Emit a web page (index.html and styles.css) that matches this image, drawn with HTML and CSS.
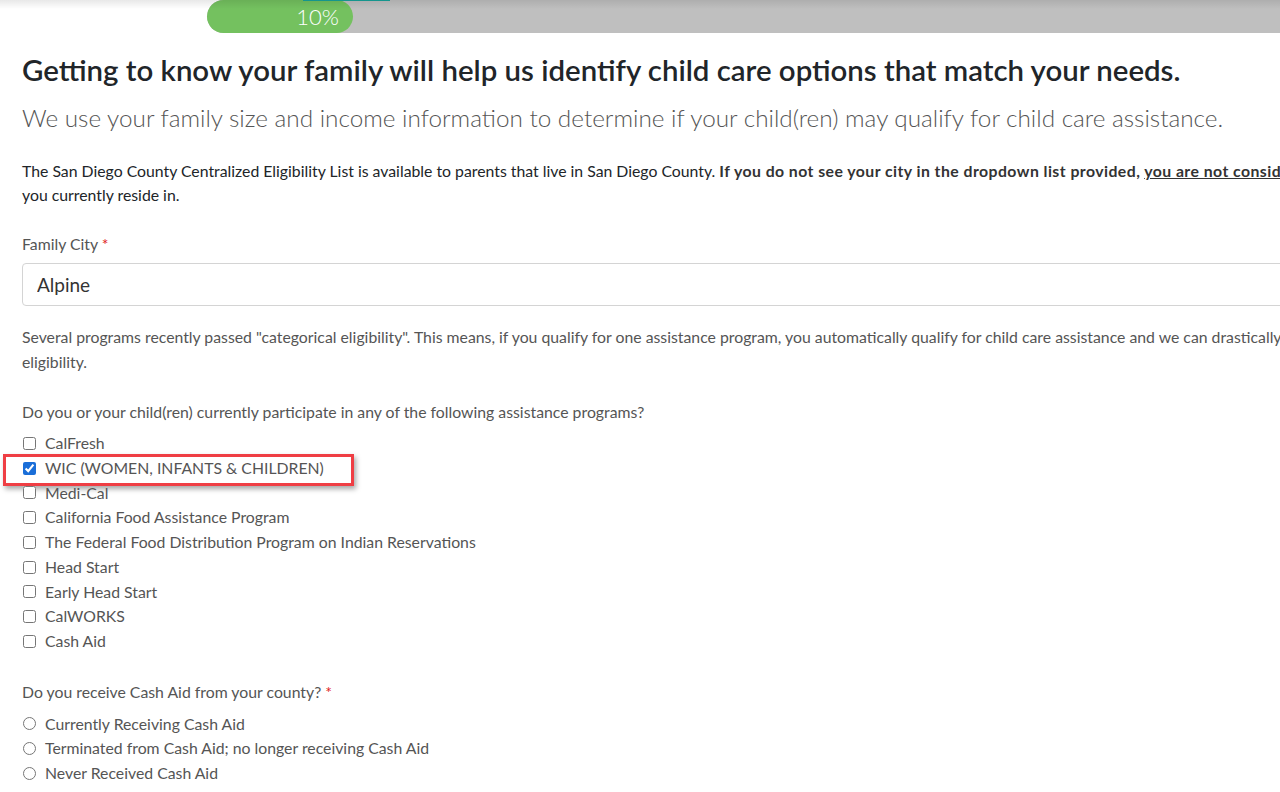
FILE: index.html
```html
<!DOCTYPE html>
<html lang="en">
<head>
    <meta charset="UTF-8">
    <meta name="viewport" content="width=device-width, initial-scale=1.0">
    <title>Family Information</title>
    <link rel="stylesheet" href="styles.css">
</head>
<body>
    <div class="page">
        <div class="progress-wrap">
            <div class="progress">
                <div class="progress-bar" style="width: 146px;">10%</div>
            </div>
            <span class="progress-tick"></span>
        </div>

        <div class="content">
            <h1>Getting to know your family will help us identify child care options that match your needs.</h1>
            <p class="lead">We use your family size and income information to determine if your child(ren) may qualify for child care assistance.</p>

            <p class="intro">The San Diego County Centralized Eligibility List is available to parents that live in San Diego County. <strong>If you do not see your city in the dropdown list provided, <u>you are not considered a resident</u></strong> and should contact the county<br>you currently reside in.</p>

            <label class="field-label" for="familyCity">Family City <span class="req">*</span></label>
            <select class="form-select" id="familyCity">
                <option>Alpine</option>
            </select>

            <p class="note">Several programs recently passed "categorical eligibility". This means, if you qualify for one assistance program, you automatically qualify for child care assistance and we can drastically reduce the time needed<br>eligibility.</p>

            <div class="question">Do you or your child(ren) currently participate in any of the following assistance programs?</div>
            <ul class="checks">
                <li><input type="checkbox" id="p1"><label for="p1">CalFresh</label></li>
                <li class="marked"><input type="checkbox" id="p2" checked><label for="p2">WIC (WOMEN, INFANTS &amp; CHILDREN)</label><span class="highlight"></span></li>
                <li><input type="checkbox" id="p3"><label for="p3">Medi-Cal</label></li>
                <li><input type="checkbox" id="p4"><label for="p4">California Food Assistance Program</label></li>
                <li><input type="checkbox" id="p5"><label for="p5">The Federal Food Distribution Program on Indian Reservations</label></li>
                <li><input type="checkbox" id="p6"><label for="p6">Head Start</label></li>
                <li><input type="checkbox" id="p7"><label for="p7">Early Head Start</label></li>
                <li><input type="checkbox" id="p8"><label for="p8">CalWORKS</label></li>
                <li><input type="checkbox" id="p9"><label for="p9">Cash Aid</label></li>
            </ul>

            <div class="question">Do you receive Cash Aid from your county? <span class="req">*</span></div>
            <ul class="checks last">
                <li><input type="radio" name="cashAid" id="c1"><label for="c1">Currently Receiving Cash Aid</label></li>
                <li><input type="radio" name="cashAid" id="c2"><label for="c2">Terminated from Cash Aid; no longer receiving Cash Aid</label></li>
                <li><input type="radio" name="cashAid" id="c3"><label for="c3">Never Received Cash Aid</label></li>
            </ul>
        </div>
    </div>
</body>
</html>
```

FILE: styles.css
```css
body {
    margin: 0;
    padding: 0;
    font-family: "Segoe UI", Lato, "Open Sans", sans-serif;
    font-size: 15.8px;
    line-height: 24.75px;
    color: #555;
    background: #fff;
    overflow: hidden;
    height: 792px;
}
.page {
    position: relative;
    width: 2400px;
}
.page::after {
    content: "";
    position: absolute;
    left: 0;
    right: 0;
    top: 0;
    height: 9px;
    background: linear-gradient(rgba(0, 0, 0, 0.09), rgba(0, 0, 0, 0));
    pointer-events: none;
}
.progress-wrap {
    position: relative;
    height: 33px;
    padding-left: 207px;
    display: flex;
}
.progress {
    flex: 1;
    background: #bfbfbf;
    border-radius: 17px 0 0 17px;
    display: flex;
}
.progress-bar {
    background: #74c15f;
    border-radius: 17px;
    color: #fff;
    font-size: 22px;
    font-weight: 300;
    line-height: 33px;
    text-align: right;
    padding-right: 14px;
    box-sizing: border-box;
}
.progress-tick {
    position: absolute;
    left: 303px;
    top: 0;
    width: 87px;
    height: 1px;
    background: #17a39a;
}
.content {
    padding: 0 22px;
}
h1 {
    margin: 20px 0 13px;
    font-size: 29.4px;
    line-height: 34px;
    font-weight: 600;
    color: #212529;
}
.lead {
    margin: 0 0 22.5px;
    font-size: 24.3px;
    line-height: 36px;
    font-weight: 300;
    color: #555;
}
.intro {
    margin: 0 0 23.5px;
    color: #212529;
}
.intro strong {
    color: #333;
    letter-spacing: 0.45px;
}
.field-label {
    display: block;
    margin-bottom: 6.5px;
}
.req {
    color: #e02020;
}
.form-select {
    display: block;
    width: 100%;
    height: 43px;
    margin: 0 0 19.5px;
    padding: 0 14px;
    border: 1px solid #d4d4d4;
    border-radius: 4px;
    background: #fff;
    font-family: inherit;
    font-size: 19px;
    color: #333;
    appearance: none;
}
.note {
    margin: 0 0 25px;
}
.question {
    margin-bottom: 6.5px;
}
.checks {
    list-style: none;
    margin: 0 0 26.5px;
    padding: 0;
}
.checks li {
    position: relative;
    display: flex;
    align-items: center;
    gap: 9px;
}
.checks input {
    margin: 0 0 0 1px;
    width: 13px;
    height: 13px;
    accent-color: #1a6ed8;
}
.highlight {
    position: absolute;
    left: -19px;
    top: -2px;
    width: 345px;
    height: 26px;
    border: 3px solid #ef3e44;
    box-shadow: 2px 3px 5px rgba(0, 0, 0, 0.35);
    pointer-events: none;
}
```
